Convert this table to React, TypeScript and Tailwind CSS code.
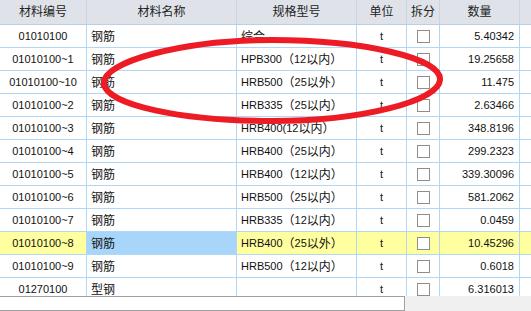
import React from "react";

const CJK = /([\u3000-\u9fff\uff00-\uffef]+)/;

function R({ s }: { s: string }) {
  const parts = s.split(CJK);
  return (
    <>
      {parts.map((p, i) =>
        CJK.test(p) ? (
          <span key={i} className="text-[12px]">
            {p}
          </span>
        ) : (
          <span key={i}>{p}</span>
        )
      )}
    </>
  );
}

type Row = { code: string; name: string; spec: string; qty: string; hl?: boolean };

const rows: Row[] = [
  { code: "01010100", name: "钢筋", spec: "综合", qty: "5.40342" },
  { code: "01010100~1", name: "钢筋", spec: "HPB300（12以内）", qty: "19.25658" },
  { code: "01010100~10", name: "钢筋", spec: "HRB500（25以外）", qty: "11.475" },
  { code: "01010100~2", name: "钢筋", spec: "HRB335（25以内）", qty: "2.63466" },
  { code: "01010100~3", name: "钢筋", spec: "HRB400(12以内）", qty: "348.8196" },
  { code: "01010100~4", name: "钢筋", spec: "HRB400（25以内）", qty: "299.2323" },
  { code: "01010100~5", name: "钢筋", spec: "HRB400（12以内）", qty: "339.30096" },
  { code: "01010100~6", name: "钢筋", spec: "HRB500（25以内）", qty: "581.2062" },
  { code: "01010100~7", name: "钢筋", spec: "HRB335（12以内）", qty: "0.0459" },
  { code: "01010100~8", name: "钢筋", spec: "HRB400（25以外）", qty: "10.45296", hl: true },
  { code: "01010100~9", name: "钢筋", spec: "HRB500（12以内）", qty: "0.6018" },
  { code: "01270100", name: "型钢", spec: "", qty: "6.316013" },
];

export default function App() {
  return (
    <div
      className="relative w-[531px] h-[311px] overflow-hidden bg-white text-[11px] text-[#111]"
      style={{ fontFamily: "'Liberation Sans', 'Noto Sans CJK SC', sans-serif" }}
    >
      <div className="h-[296px] overflow-hidden">
        {/* header */}
        <div className="flex h-[25px] bg-[#dfe3e9] border-b border-[#bccfe2] text-[12px] text-[#222]">
          <div className="w-[87px] shrink-0 border-r border-[#c9d5e2] flex items-center justify-center">材料编号</div>
          <div className="w-[150px] shrink-0 border-r border-[#c9d5e2] flex items-center justify-center">材料名称</div>
          <div className="w-[120px] shrink-0 border-r border-[#c9d5e2] flex items-center justify-center">规格型号</div>
          <div className="w-[50px] shrink-0 border-r border-[#c9d5e2] flex items-center justify-center">单位</div>
          <div className="w-[33px] shrink-0 border-r border-[#c9d5e2] flex items-center justify-center">拆分</div>
          <div className="w-[80px] shrink-0 border-r border-[#c9d5e2] flex items-center justify-center">数量</div>
          <div className="flex-1" />
        </div>
        {rows.map((r, i) => (
          <div
            key={i}
            className={`flex h-[23px] border-b border-[#b0d8f6] ${r.hl ? "bg-[#ffffa0]" : "bg-white"}`}
          >
            <div className="w-[87px] shrink-0 border-r border-[#b0d8f6] flex items-center justify-center pt-[1px]">
              <R s={r.code} />
            </div>
            <div
              className={`w-[150px] shrink-0 border-r border-[#b0d8f6] flex items-center pl-[4px] pt-[1px] ${r.hl ? "bg-[#a8d6fa]" : ""}`}
            >
              <R s={r.name} />
            </div>
            <div className="w-[120px] shrink-0 border-r border-[#b0d8f6] flex items-center pl-[4px] pt-[1px] whitespace-nowrap overflow-hidden">
              <R s={r.spec} />
            </div>
            <div className="w-[50px] shrink-0 border-r border-[#b0d8f6] flex items-center justify-center pt-[1px]">t</div>
            <div className="w-[33px] shrink-0 border-r border-[#b0d8f6] flex items-center justify-center">
              <div className="w-[13px] h-[13px] border border-[#8e8e8e] bg-white" />
            </div>
            <div className="w-[80px] shrink-0 border-r border-[#b0d8f6] flex items-center justify-end pr-[5px] pt-[1px]">
              {r.qty}
            </div>
            <div className="flex-1" />
          </div>
        ))}
      </div>
      <div className="flex h-[15px] bg-[#f0f0f0]">
        <div className="w-[405px] h-[15px] bg-white border-t border-r border-b border-[#a0a0a0]" />
      </div>

      <svg
        className="absolute left-0 top-0 pointer-events-none"
        width="531"
        height="311"
        viewBox="0 0 531 311"
      >
        <path
          d="M 104 84 C 101 62, 182 40, 272 40 C 362 40, 442 58, 440 80 C 438 101, 362 121, 272 121 C 182 121, 107 105, 104 84 Z"
          fill="none"
          stroke="#ed1c24"
          strokeWidth="6"
        />
      </svg>
    </div>
  );
}
